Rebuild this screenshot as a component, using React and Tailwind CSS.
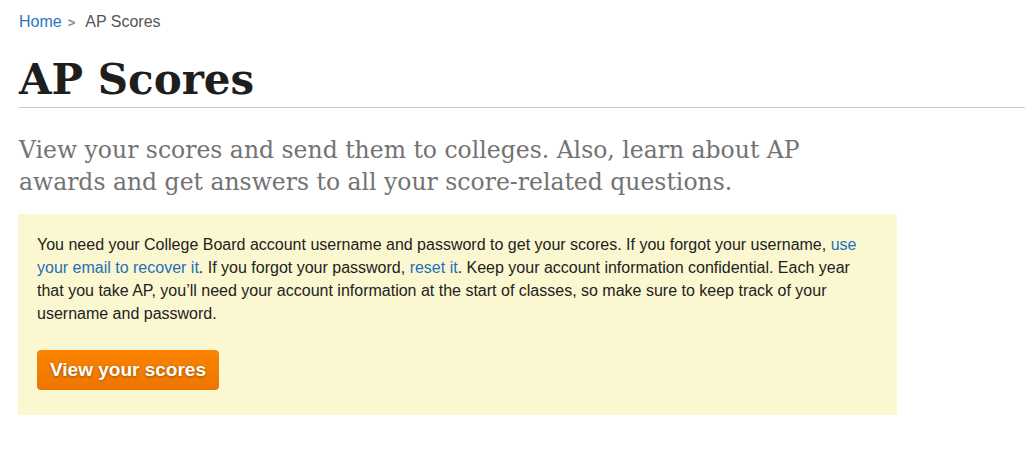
import React from "react";

export default function App() {
  return (
    <div className="w-[1025px] min-h-[465px] bg-white pl-[19px] font-['Liberation_Sans',Arial,sans-serif]">
      {/* Breadcrumb */}
      <nav className="pt-[12px] text-[16px] leading-[20px] text-[#555]">
        <a href="#" className="text-[#2a74c3]">Home</a>
        <span className="ml-[6px] mr-[10px] text-[13px] font-bold text-[#888]">&gt;</span>
        <span>AP Scores</span>
      </nav>

      {/* Title */}
      <h1 className="mt-[22px] border-b border-[#cccccc] pb-[2px] font-['DejaVu_Serif',serif] text-[42px] font-bold leading-[50px] text-[#1e1e1e]">
        AP Scores
      </h1>

      <p className="mt-[26px] w-[840px] font-['DejaVu_Serif',serif] text-[23.5px] leading-[32px] text-[#737373]">
        View your scores and send them to colleges. Also, learn about AP awards and get answers to all your score-related questions.
      </p>

      {/* Notice */}
      <div className="mt-[16px] w-[879px] -ml-px bg-[#fbf7d0] px-[19px] pt-[19px] pb-[25px]">
        <p className="text-[16px] leading-[23px] text-[#222]">
          You need your College Board account username and password to get your scores. If you forgot your username,{" "}
          <a href="#" className="text-[#1f70b8]">use your email to recover it</a>. If you forgot your password,{" "}
          <a href="#" className="text-[#1f70b8]">reset it</a>. Keep your account information confidential. Each year that you take AP, you’ll need your account information at the start of classes, so make sure to keep track of your username and password.
        </p>
        <button className="mt-[25px] h-[40px] rounded-[4px] bg-gradient-to-b from-[#fb8300] to-[#ee7600] px-[13px] text-[19px] font-bold text-white [text-shadow:0_1px_3px_rgba(0,0,0,0.35)]">
          View your scores
        </button>
      </div>
    </div>
  );
}
